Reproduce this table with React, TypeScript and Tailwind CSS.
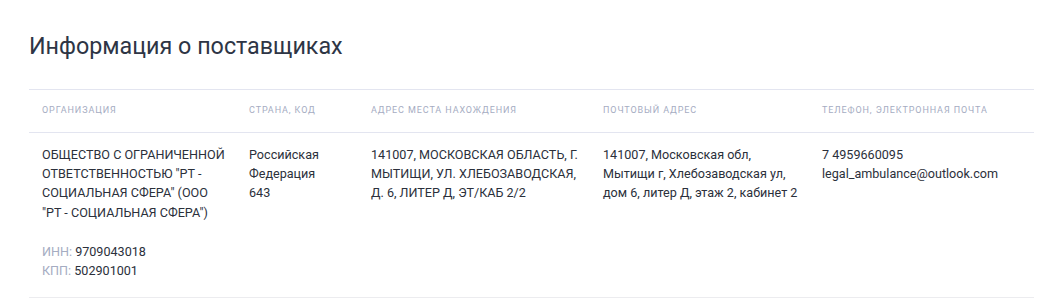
export default function App() {
  const headers = [
    { label: "Организация", w: "w-[207px]" },
    { label: "Страна, код", w: "w-[122px]" },
    { label: "Адрес места нахождения", w: "w-[232px]" },
    { label: "Почтовый адрес", w: "w-[219px]" },
    { label: "Телефон, электронная почта", w: "flex-1" },
  ];

  const lines = (items: string[]) =>
    items.map((t, i) => (
      <div key={i} className="whitespace-nowrap">
        {t}
      </div>
    ));

  return (
    <div className="min-h-[306px] bg-white pl-[29px] pr-[18px] pt-[32px] font-['Roboto',sans-serif] text-[#2b303b]">
      <h1 className="text-[23.3px] leading-[28px] font-normal text-[#2e3545]">Информация о поставщиках</h1>

      <div className="mt-[29px] border-t border-[#e3e5f0]">
        <div className="flex h-[43px] items-center border-b border-[#e3e5f0]">
          {headers.map((h) => (
            <div key={h.label} className={`${h.w} pl-[13px] text-[9px] uppercase tracking-[0.1em] text-[#a5acc2]`}>
              {h.label}
            </div>
          ))}
        </div>

        <div className="flex border-b border-[#ececef] pt-[12px] pb-[17px] text-[12.6px] leading-[19.2px]">
          <div className="w-[207px] pl-[13px]">
            {lines([
              "ОБЩЕСТВО С ОГРАНИЧЕННОЙ",
              'ОТВЕТСТВЕННОСТЬЮ "РТ -',
              'СОЦИАЛЬНАЯ СФЕРА" (ООО',
              '"РТ - СОЦИАЛЬНАЯ СФЕРА")',
            ])}
            <div className="mt-[20px]">
              <span className="text-[#a5acc2]">ИНН: </span>9709043018
            </div>
            <div>
              <span className="text-[#a5acc2]">КПП: </span>502901001
            </div>
          </div>
          <div className="w-[122px] pl-[13px]">{lines(["Российская", "Федерация", "643"])}</div>
          <div className="w-[232px] pl-[13px]">
            {lines(["141007, МОСКОВСКАЯ ОБЛАСТЬ, Г.", "МЫТИЩИ, УЛ. ХЛЕБОЗАВОДСКАЯ,", "Д. 6, ЛИТЕР Д, ЭТ/КАБ 2/2"])}
          </div>
          <div className="w-[219px] pl-[13px]">
            {lines(["141007, Московская обл,", "Мытищи г, Хлебозаводская ул,", "дом 6, литер Д, этаж 2, кабинет 2"])}
          </div>
          <div className="flex-1 pl-[13px]">{lines(["7 4959660095", "legal_ambulance@outlook.com"])}</div>
        </div>
      </div>
    </div>
  );
}
